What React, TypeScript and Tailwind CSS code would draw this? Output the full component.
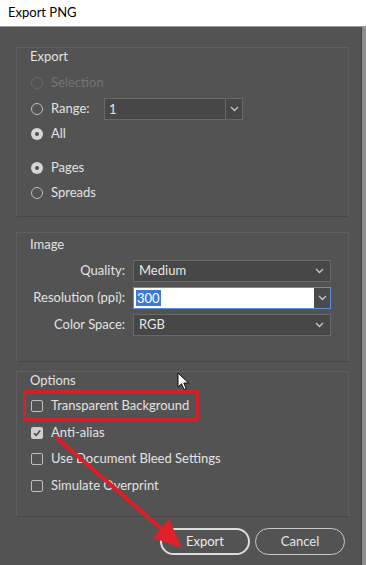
import React from 'react';

const Radio = ({ label, checked = false, disabled = false }: { label: string; checked?: boolean; disabled?: boolean }) => (
  <div className="flex items-center h-5 gap-2">
    {checked ? (
      <span className="w-3 h-3 rounded-full bg-[#d6d6d6] flex items-center justify-center">
        <span className="w-1 h-1 rounded-full bg-[#4e4e4e]" />
      </span>
    ) : (
      <span className={`w-3 h-3 rounded-full border ${disabled ? 'border-[#686868]' : 'border-[#bdbdbd]'}`} />
    )}
    <span className={disabled ? 'text-[#747474]' : 'text-[#e2e2e2]'}>{label}</span>
  </div>
);

const Checkbox = ({ label, checked = false }: { label: string; checked?: boolean }) => (
  <div className="flex items-center h-5 gap-2">
    {checked ? (
      <span className="w-3 h-3 rounded-[2px] bg-[#cfcfcf] flex items-center justify-center">
        <svg width="10" height="10" viewBox="0 0 10 10">
          <path d="M2 5.2 L4.2 7.4 L8.2 2.6" fill="none" stroke="#4a4a4a" strokeWidth="1.6" />
        </svg>
      </span>
    ) : (
      <span className="w-3 h-3 rounded-[2px] border border-[#bdbdbd]" />
    )}
    <span className="text-[#e2e2e2]">{label}</span>
  </div>
);

const Chevron = () => (
  <svg width="9" height="6" viewBox="0 0 9 6">
    <path d="M1 1 L4.5 4.5 L8 1" fill="none" stroke="#c8c8c8" strokeWidth="1.3" />
  </svg>
);

const Select = ({ value }: { value: string }) => (
  <div className="w-[198px] h-[22px] flex items-center justify-between border border-[#686868] bg-[#474747] pl-[5px] pr-[6px] text-[#e6e6e6]">
    <span>{value}</span>
    <Chevron />
  </div>
);

const Group = ({ title, className, children }: { title: string; className: string; children: React.ReactNode }) => (
  <div className={`ml-4 mr-[12px] border border-[#5f5f5f] border-b-[#474747] ${className}`}>
    <div className="pl-[13px] h-4 leading-4 text-[#e2e2e2]">{title}</div>
    {children}
  </div>
);

export default function App() {
  return (
    <div className="relative w-[366px] h-[565px] overflow-hidden bg-[#535353] font-['Lato','Liberation_Sans',sans-serif] text-[13px]">
      <div className="h-[27px] bg-white text-black flex items-center pl-2 border-b border-[#9c9c9c]">
        Export PNG
      </div>

      <div className="flex h-[538px]">
        <div className="w-[362px] border-r border-[#424242] pt-5">
          <Group title="Export" className="h-[170px]">
            <div className="pl-[14px] flex flex-col">
              <div className="mt-[9px]">
                <Radio label="Selection" disabled />
              </div>
              <div className="mt-[5px] flex items-center h-[22px]">
                <div className="w-[73px]">
                  <Radio label="Range:" />
                </div>
                <div className="w-[139px] h-[22px] flex border border-[#686868] bg-[#474747]">
                  <span className="flex-1 pl-[4px] leading-5 text-[#e6e6e6]">1</span>
                  <span className="w-[17px] border-l border-[#686868] flex items-center justify-center">
                    <Chevron />
                  </span>
                </div>
              </div>
              <div className="mt-[4px]">
                <Radio label="All" checked />
              </div>
              <div className="mt-[14px]">
                <Radio label="Pages" checked />
              </div>
              <div className="mt-[5px]">
                <Radio label="Spreads" />
              </div>
            </div>
          </Group>

          <Group title="Image" className="mt-[15px] h-[130px] pt-[3px]">
            <div className="flex flex-col gap-[5px] mt-[8px] text-[#e2e2e2]">
              <div className="flex items-center">
                <span className="w-[116px] text-right pr-[8px]">Quality:</span>
                <Select value="Medium" />
              </div>
              <div className="flex items-center">
                <span className="w-[116px] text-right pr-[8px] whitespace-nowrap">Resolution (ppi):</span>
                <div className="w-[198px] h-[22px] flex border border-[#5d8fd6] bg-white">
                  <span className="flex-1 pl-[2px] flex items-center">
                    <span className="bg-[#3d7ad6] text-white leading-4 px-[1px]">300</span>
                  </span>
                  <span className="w-[16px] bg-[#4a4a4a] flex items-center justify-center">
                    <Chevron />
                  </span>
                </div>
              </div>
              <div className="flex items-center">
                <span className="w-[116px] text-right pr-[8px]">Color Space:</span>
                <Select value="RGB" />
              </div>
            </div>
          </Group>

          <Group title="Options" className="mt-[9px] h-[146px]">
            <div className="pl-[14px] flex flex-col mt-[8px]">
              <Checkbox label="Transparent Background" />
              <div className="mt-[7px]">
                <Checkbox label="Anti-alias" checked />
              </div>
              <div className="mt-[6px]">
                <Checkbox label="Use Document Bleed Settings" />
              </div>
              <div className="mt-[7px]">
                <Checkbox label="Simulate Overprint" />
              </div>
            </div>
          </Group>

          <div className="flex justify-end gap-[5px] pr-[16px] mt-[11px]">
            <button className="w-[90px] h-[27px] rounded-full border-2 border-[#dcdcdc] text-[#ececec]">Export</button>
            <button className="w-[90px] h-[27px] rounded-full border-[1.5px] border-[#c8c8c8] text-[#e6e6e6]">Cancel</button>
          </div>
        </div>
        <div className="w-[4px] bg-[#8d8d8d]" />
      </div>

      {/* annotation: red box */}
      <div className="absolute left-[23px] top-[390px] w-[176px] h-[31px] border-[3px] border-[#d52129] rounded-[2px]" />

      {/* annotation: red arrow */}
      <svg className="absolute left-0 top-0" width="366" height="565" viewBox="0 0 366 565">
        <line x1="57" y1="438" x2="165" y2="532" stroke="#dd1f28" strokeWidth="4" strokeLinecap="round" />
        <polygon points="182,548 153,538 169,519" fill="#e0212a" />
      </svg>

      {/* mouse cursor */}
      <svg className="absolute left-[177px] top-[372px]" width="13" height="19" viewBox="0 0 13 19">
        <path d="M1 1 L1 15 L4.5 11.8 L7 17.5 L9.2 16.5 L6.8 11 L11.5 11 Z" fill="#ffffff" stroke="#111111" strokeWidth="1" />
      </svg>
    </div>
  );
}
